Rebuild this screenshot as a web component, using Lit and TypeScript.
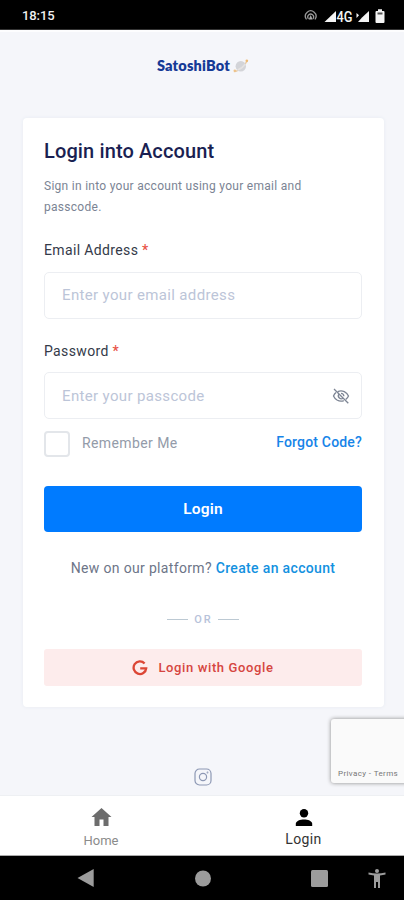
import { LitElement, html, css } from "lit";
import { customElement } from "lit/decorators.js";

@customElement("status-bar")
class StatusBar extends LitElement {
  static styles = css`
    :host { display: flex; justify-content: space-between; align-items: center; height: 30px; box-sizing: border-box; background: #000; padding: 3px 18px 0 22px; color: #f0f0f0; border-bottom: 1px solid #333; }
    .time { font-size: 13px; font-weight: 500; line-height: 16px; letter-spacing: -0.1px; }
    svg { display: block; }
    .net { font-size: 14.5px; font-weight: 500; }
  `;
  render() {
    return html`
      <span class="time">18:15</span>
      <svg width="83" height="18" viewBox="303 6 83 18">
        <g fill="none" stroke="#999" stroke-width="1.3" stroke-linecap="round">
          <path d="M306.200 18a5.300 5.300 0 1 1 9 0M308.200 17.500a2.900 2.900 0 1 1 5 0" />
        </g>
        <path d="M310.700 14l-2 4.500h4z" fill="#aaa" />
        <g fill="#f4f4f4">
          <path d="M324.500 21h11.500v-11z" />
          <text class="net" x="336.600" y="20.700" textLength="16" lengthAdjust="spacingAndGlyphs">4G</text>
          <path d="M358 21h11v-11l-7 6.500z" />
          <path d="M356.500 12l2.500 2.300-2.500 2.700z" />
          <path d="M378 8.200h4v1.800h1.500q1 0 1 1v10q0 1-1 1h-7q-1 0-1-1v-10q0-1 1-1h1.500z" />
        </g>
        <path d="M377.500 11.500h5v2h-5z" fill="#555" />
      </svg>
    `;
  }
}

@customElement("login-card")
class LoginCard extends LitElement {
  static styles = css`
    :host { display: flex; flex-direction: column; box-sizing: border-box; width: 361px; height: 589px; margin-left: 23px; padding: 20px 22px 21px 21px; background: #fff; border-radius: 4px; box-shadow: 0 0 3px 1px #eceff5; }
    h1 { margin: 0; font-size: 20px; font-weight: 500; line-height: 26px; color: #1a1f52; letter-spacing: 0.12px; }
    .lead { margin: 12px 0 0; font-size: 12px; line-height: 21px; color: #7b8494; letter-spacing: 0.28px; }
    .label { margin-top: 21px; font-size: 14px; line-height: 22px; color: #343a49; letter-spacing: 0.36px; }
    .label b { color: #e85347; font-weight: 500; }
    .field { display: flex; align-items: center; justify-content: space-between; box-sizing: border-box; height: 47px; margin-top: 11px; padding: 0 11px 2px 17px; border: 1px solid #eceef2; border-radius: 5px; color: #bcc5d8; font-size: 15px; letter-spacing: 0.35px; }
    .second + .field { margin-top: 10px; padding-bottom: 0; }
    .row { display: flex; align-items: center; height: 25px; margin-top: 12px; }
    .box { box-sizing: border-box; width: 26px; height: 26px; border: 2px solid #e3e6ea; border-radius: 4px; }
    .remember { margin: -2px 0 0 12px; font-size: 14px; color: #939ba9; letter-spacing: 0.4px; }
    .forgot { margin: -3px 0 0 auto; font-size: 14px; font-weight: 500; color: #1684e8; letter-spacing: 0.18px; }
    .login { display: flex; align-items: center; justify-content: center; height: 46px; margin-top: 30px; border-radius: 4px; background: #007bff; color: #fff; font-size: 15.5px; font-weight: 600; letter-spacing: 0.2px; }
    .join { margin: 25px -5px 0; text-align: center; font-size: 14px; line-height: 22px; color: #6d7588; letter-spacing: 0.34px; }
    .join a { color: #1391df; font-weight: 500; }
    .or { display: flex; align-items: center; justify-content: center; gap: 6px; height: 16px; margin-top: 32px; font-size: 11px; font-weight: 500; letter-spacing: 2px; color: #b7c2da; }
    .or i { width: 21px; height: 1px; background: #bcc9d3; }
    .or span { margin-right: -1px; }
    .google { display: flex; align-items: center; justify-content: center; gap: 10px; height: 37px; margin-top: 22px; background: #fdecec; border-radius: 3px; color: #d64540; font-size: 13px; font-weight: 500; letter-spacing: 0.62px; }
    svg { display: block; }
  `;
  render() {
    return html`
      <h1>Login into Account</h1>
      <p class="lead">Sign in into your account using your email and<br />passcode.</p>
      <div class="label">Email Address <b>*</b></div>
      <div class="field">Enter your email address</div>
      <div class="label second">Password <b>*</b></div>
      <div class="field">
        Enter your passcode
        <svg width="18" height="18" viewBox="0 0 18 18" fill="none" stroke="#7d8594" stroke-width="1.3">
          <path d="M5.800 4.600Q9 3 12.300 4.600Q15.300 6.200 16.500 9Q15.500 11.200 13.800 12.400M11.800 13.600Q8.500 15 5 13Q2.600 11.500 1.500 9Q2.400 6.900 4 5.600M2 2L16.300 16.300M11.300 11A3 3 0 0 1 6.900 7M9 6.300Q11.700 6.400 11.900 9.200" />
        </svg>
      </div>
      <div class="row">
        <span class="box"></span><span class="remember">Remember Me</span>
        <a class="forgot">Forgot Code?</a>
      </div>
      <div class="login">Login</div>
      <div class="join">New on our platform? <a>Create an account</a></div>
      <div class="or"><i></i><span>OR</span><i></i></div>
      <div class="google">
        <svg width="16" height="16" viewBox="0 0 16 16" fill="none" stroke="#dc4635" stroke-width="2.300">
          <path d="M12.600 3.500A6.300 6.300 0 1 0 14.200 8.300H8.200" />
        </svg>
        <span>Login with Google</span>
      </div>
    `;
  }
}

@customElement("app-root")
class AppRoot extends LitElement {
  static styles = css`
    :host { display: flex; flex-direction: column; position: relative; width: 404px; height: 900px; overflow: hidden; background: #f5f6fa; font-family: Roboto, "Liberation Sans", sans-serif; }
    svg { display: block; }
    .brand { display: flex; align-items: center; justify-content: center; gap: 3px; height: 89px; box-sizing: border-box; padding: 0 0 18px 2px; border-top: 2px solid #fdfdfe; color: #153a96; font: 800 14.5px/20px Lato, sans-serif; letter-spacing: 0.2px; }
    .social { display: flex; justify-content: center; height: 88px; box-sizing: border-box; padding: 61px 0 0 1px; }
    .tabs { display: grid; grid-template-columns: 1fr 1fr; height: 61px; box-sizing: border-box; background: #fff; border-top: 1px solid #eef0f3; border-bottom: 1px solid #aaa; }
    .tab { display: flex; flex-direction: column; align-items: center; padding-top: 11px; font-size: 13px; line-height: 18px; color: #8b8b8b; }
    .tab span { margin-top: 5px; }
    .tab.on { color: #333; letter-spacing: 0.4px; font-size: 14px; padding-left: 1px; }
    .tab.on span { margin-top: 3px; }
    .keys { height: 44px; background: #000; }
    .captcha { position: absolute; left: 331px; top: 719px; width: 90px; height: 64px; box-sizing: border-box; padding: 49px 0 0 7px; border-radius: 3px; background: #fafafa; box-shadow: 0 0 4px #888; font-size: 8px; line-height: 12px; letter-spacing: 0.38px; color: #777; white-space: nowrap; }
  `;
  render() {
    return html`
      <status-bar></status-bar>
      <div class="brand">
        <span>SatoshiBot</span>
        <svg width="16" height="14" viewBox="0 0 16 14">
          <path d="M1 12.500Q4 13 9 8T14.500 1.500" fill="none" stroke="#e9cda6" stroke-width="1.500" />
          <circle cx="7.800" cy="7.200" r="5.200" fill="#d3d4d8" />
          <path d="M4.500 11Q9 9.500 12.300 5" fill="none" stroke="#e4e2e1" stroke-width="1.500" />
          <circle cx="13.800" cy="1.800" r="1.300" fill="#eeb973" />
          <circle cx="1.800" cy="11.700" r="1.300" fill="#eec28a" />
        </svg>
      </div>
      <login-card></login-card>
      <div class="social">
        <svg width="18" height="18" viewBox="0 0 18 18" fill="none" stroke="#8d98b4" stroke-width="1.200">
          <rect x="1" y="1" width="16" height="16" rx="4.500" />
          <circle cx="9" cy="9" r="3.600" />
          <circle cx="13.500" cy="4.500" r=".3" />
        </svg>
      </div>
      <nav class="tabs">
        <div class="tab">
          <svg width="22" height="20" viewBox="0 0 22 20"><path d="M11.500 1L1.500 10h3v9h5v-6.500h4V19h5v-9h3z" fill="#6d6d6d" /></svg>
          <span>Home</span>
        </div>
        <div class="tab on">
          <svg width="18" height="20" viewBox="0 0 18 20"><circle cx="9" cy="6.300" r="4.200" /><path d="M.8 19v-2.200c0-2.800 4.500-4.300 8.200-4.300s8.200 1.500 8.200 4.300V19z" /></svg>
          <span>Login</span>
        </div>
      </nav>
      <div class="keys">
        <svg width="404" height="44" viewBox="0 856 404 44" fill="#9c9c9c">
          <path d="M93.700 869v18L77.500 878z" />
          <circle cx="203" cy="878.500" r="8" />
          <rect x="311" y="870" width="17" height="17" rx="1.500" />
          <circle cx="377" cy="871" r="2" />
          <path d="M368.500 872.500q8.500 2 17 0v2q-2.500 .7-5.500 1v12.500h-2v-6h-2v6h-2v-12.500q-3-.3-5.500-1z" />
        </svg>
      </div>
      <div class="captcha">Privacy - Terms</div>
    `;
  }
}
